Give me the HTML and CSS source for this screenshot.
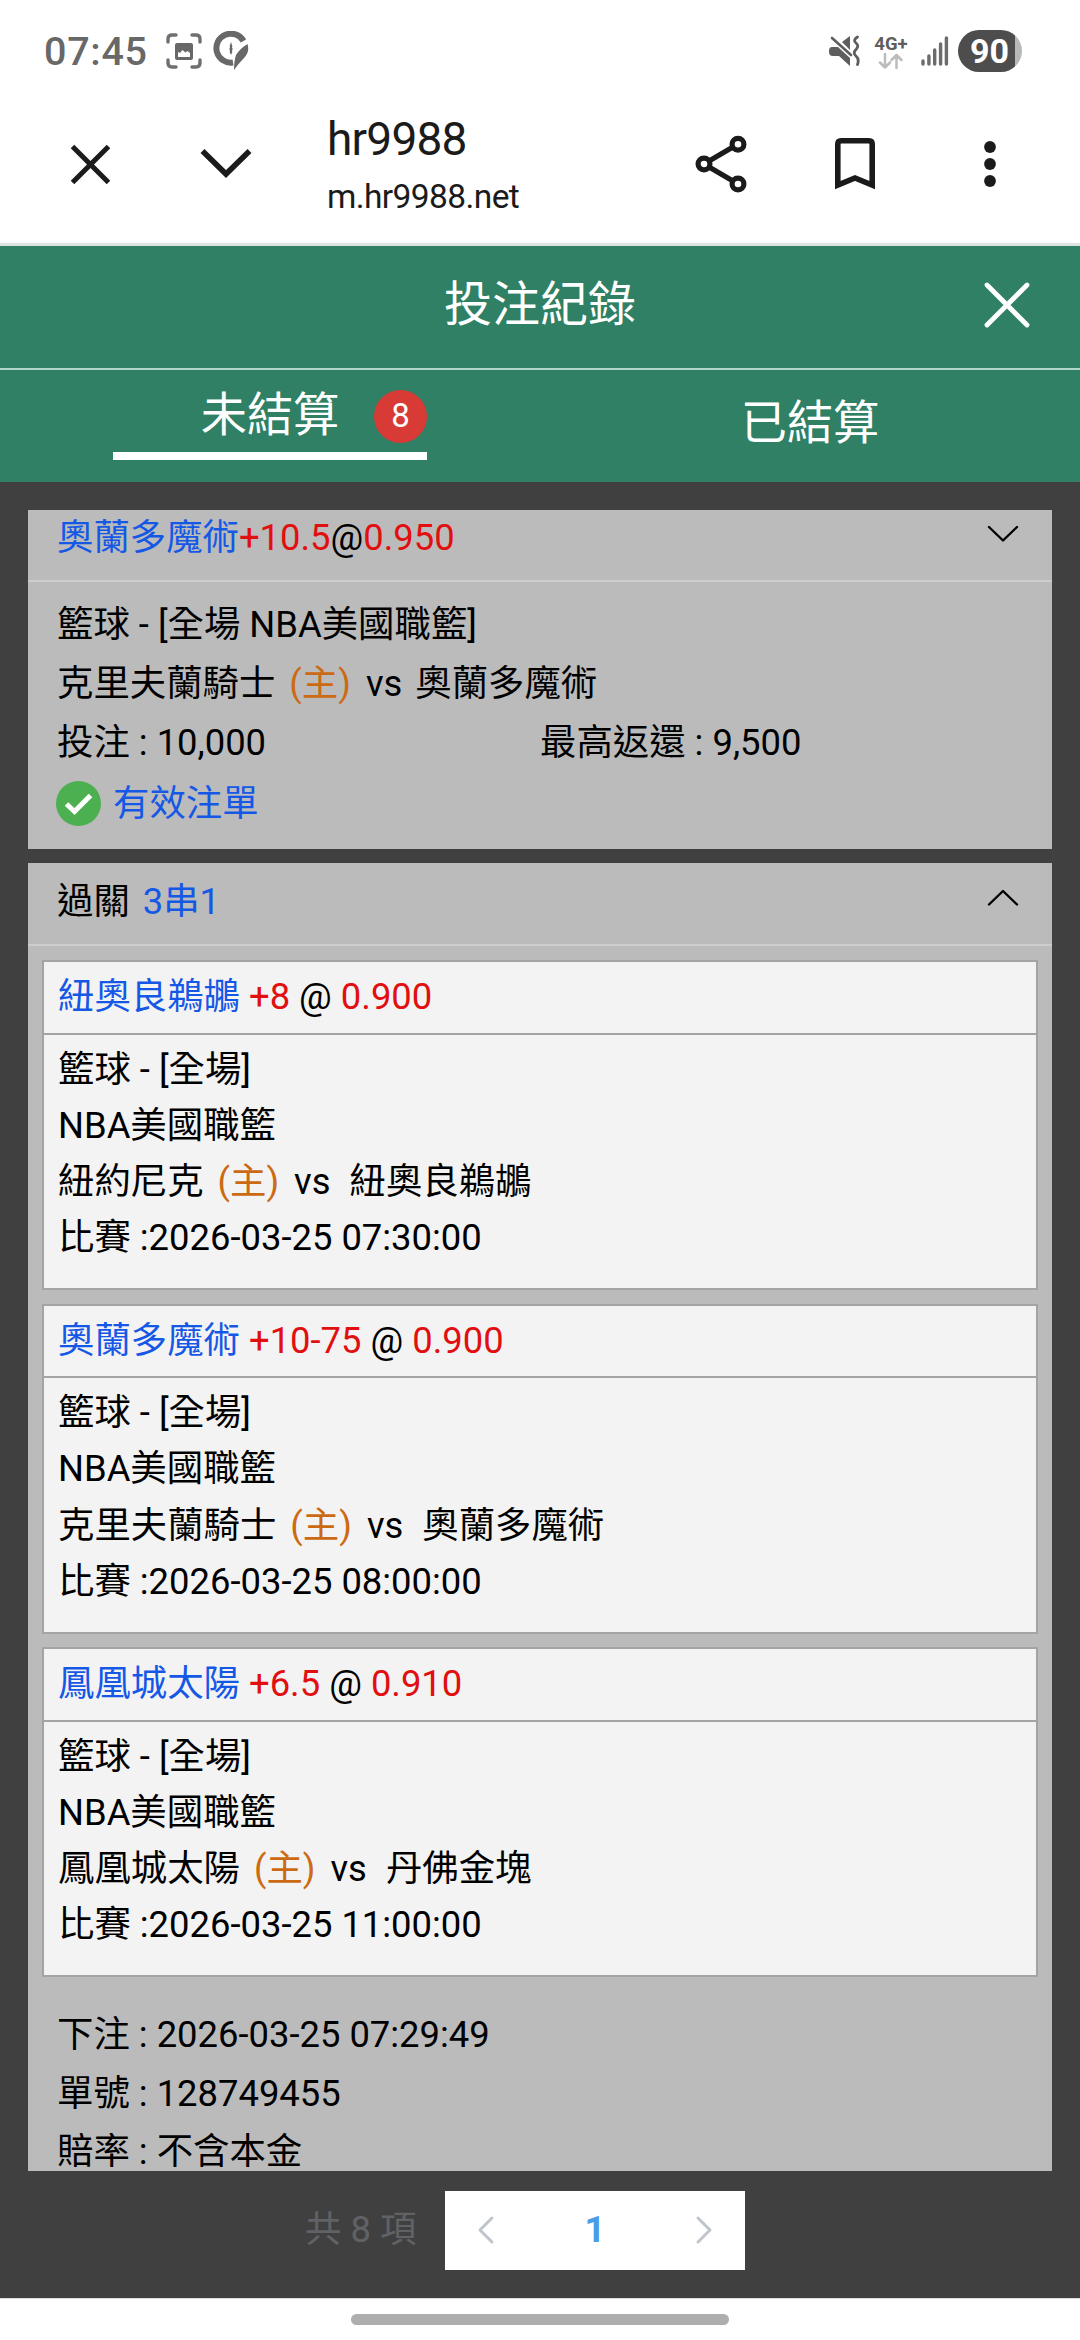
FILE: index.html
```
<!DOCTYPE html>
<html lang="zh-Hant">
<head>
<meta charset="utf-8">
<title>投注紀錄</title>
<link rel="stylesheet" href="styles.css">
</head>
<body>
<div class="screen">
  <div class="statusbar">
    <span class="clock">07:45</span>
    <svg class="ic-shot" width="36" height="36" viewBox="0 0 36 36"><g fill="none" stroke="#707070" stroke-width="3.4" stroke-linecap="round"><path d="M2 9V6q0-4 4-4h4M26 2h4q4 0 4 4v3M34 27v3q0 4-4 4h-4M10 34H6q-4 0-4-4v-3"/></g><path fill="#686868" fill-rule="evenodd" d="M11 10h14q2 0 2 2v13q0 2-2 2H11q-2 0-2-2V12q0-2 2-2zM12 24h12v-4l-2.500-2-2 1.500-3-2.500-2.500 3-2-1z"/></svg>
    <svg class="ic-clock" width="36" height="40" viewBox="0 0 36 40"><path d="M30.500 10A14.500 14.500 0 1 0 20 31.500" fill="none" stroke="#686868" stroke-width="6"/><path d="M34.500 13q-8 5-11.500 11-2 6-2 15 5-7 10-12 6-6 3.500-14z" fill="#686868"/><path d="M18 11l1.300 4-.3 2 1 1-1 1 .3 2-1.300 3-1.300-3 .3-2-1-1 1-1-.3-2z" fill="#686868"/></svg>
    <div class="status-right">
      <svg width="32" height="32" viewBox="0 0 32 32"><path d="M0 16q0-4 3-4h6l12 11v8L10 21H4q-4 0-4-4z" fill="#5e5e5e"/><path d="M13 7l8-6v14z" fill="#5e5e5e"/><path d="M3 3l19 17" stroke="#5e5e5e" stroke-width="2.600" stroke-linecap="round"/><path d="M28.500 2q-5 3-1.500 6t0 6.500 0 6.500 1.500 8.500" fill="none" stroke="#5e5e5e" stroke-width="2.800" stroke-linecap="round"/></svg>
      <div class="net"><span>4G+</span>
        <svg width="28" height="17" viewBox="0 0 28 17"><path d="M8 1v13M3 9.500l5 5 5-5M19.500 15V2M14.500 7l5-5 5 5" fill="none" stroke="#bcbcbc" stroke-width="2.500" stroke-linecap="round" stroke-linejoin="round"/></svg>
      </div>
      <svg class="signal" width="28" height="32" viewBox="0 0 28 32"><path d="M2 26v3M7.900 21v8M13.700 15v14M19.600 9v20M25.400 3v26" stroke="#6c6c6c" stroke-width="3.400" stroke-linecap="round"/></svg>
      <div class="battery">90</div>
    </div>
  </div>

  <div class="browserbar">
    <svg class="ic-close" width="41" height="41" viewBox="0 0 41 41"><path d="M2.500 2.500l36 36M38.500 2.500l-36 36" stroke="#1b1b1b" stroke-width="5"/></svg>
    <svg class="ic-down" width="52" height="32" viewBox="0 0 52 32"><path d="M2.500 3L26 26 49.500 3" fill="none" stroke="#1b1b1b" stroke-width="5.600"/></svg>
    <div class="site">
      <div class="site-title">hr9988</div>
      <div class="site-url">m.hr9988.net</div>
    </div>
    <svg class="ic-share" width="54" height="60" viewBox="0 0 54 60"><g fill="none" stroke="#1b1b1b" stroke-width="5.200"><circle cx="10" cy="30" r="5.900"/><circle cx="44" cy="10.200" r="5.900"/><circle cx="44" cy="50" r="5.900"/><path d="M15 27l24-14M15 33l24 14"/></g></svg>
    <svg class="ic-mark" width="40" height="52" viewBox="0 0 40 52"><path d="M2.800 47V6q0-3.200 3.200-3.200h28q3.200 0 3.200 3.200v41L20 40z" fill="none" stroke="#1b1b1b" stroke-width="5.600"/></svg>
    <svg class="ic-more" width="12" height="46" viewBox="0 0 12 46"><g fill="#1b1b1b"><circle cx="6" cy="6" r="5.900"/><circle cx="6" cy="23" r="5.900"/><circle cx="6" cy="40" r="5.900"/></g></svg>
  </div>

  <div class="titlebar">
    <h1>投注紀錄</h1>
    <svg class="ic-exit" width="46" height="46" viewBox="0 0 46 46"><path d="M3 3l40 40M43 3L3 43" stroke="#fff" stroke-width="4.800" stroke-linecap="round"/></svg>
  </div>
  <div class="tabs">
    <div class="tab"><div class="tab-active">未結算<span class="badge">8</span></div></div>
    <div class="tab tab-idle">已結算</div>
  </div>

  <div class="list">
    <section class="card card-first">
      <header class="card-head">
        <div><span class="blue">奧蘭多魔術</span><span class="red">+10.5</span>@<span class="red">0.950</span></div>
        <svg class="chev" width="32" height="18" viewBox="0 0 32 18"><path d="M2 2l14 13.500L30 2" fill="none" stroke="#000" stroke-width="2.400" stroke-linecap="round" stroke-linejoin="round"/></svg>
      </header>
      <div class="card-body">
        <div class="row">籃球 - [全場 NBA美國職籃]</div>
        <div class="row">克里夫蘭騎士<span class="home">(主)</span>vs<span class="away">奧蘭多魔術</span></div>
        <div class="row split"><span>投注 : 10,000</span><span>最高返還 : 9,500</span></div>
        <div class="row valid">
          <svg width="45" height="45" viewBox="0 0 45 45"><circle cx="22.500" cy="22.500" r="22.500" fill="#4caf50"/><path d="M10.500 23l8 7.500L34.500 14.500" fill="none" stroke="#fff" stroke-width="5"/></svg>
          <span class="blue">有效注單</span>
        </div>
      </div>
    </section>

    <section class="card">
      <header class="card-head">
        <div>過關<span class="blue combo">3串1</span></div>
        <svg class="chev" width="32" height="18" viewBox="0 0 32 18"><path d="M2 15.500L16 2l14 13.500" fill="none" stroke="#000" stroke-width="2.400" stroke-linecap="round" stroke-linejoin="round"/></svg>
      </header>
      <div class="legs">
        <article class="leg">
          <div class="leg-head"><span class="blue">紐奧良鵜鶘</span> <span class="red">+8</span> @ <span class="red">0.900</span></div>
          <div class="leg-body">
            <div>籃球 - [全場]</div>
            <div>NBA美國職籃</div>
            <div>紐約尼克<span class="home">(主)</span>vs<span class="away">紐奧良鵜鶘</span></div>
            <div>比賽 :2026-03-25 07:30:00</div>
          </div>
        </article>
        <article class="leg">
          <div class="leg-head"><span class="blue">奧蘭多魔術</span> <span class="red">+10-75</span> @ <span class="red">0.900</span></div>
          <div class="leg-body">
            <div>籃球 - [全場]</div>
            <div>NBA美國職籃</div>
            <div>克里夫蘭騎士<span class="home">(主)</span>vs<span class="away">奧蘭多魔術</span></div>
            <div>比賽 :2026-03-25 08:00:00</div>
          </div>
        </article>
        <article class="leg">
          <div class="leg-head"><span class="blue">鳳凰城太陽</span> <span class="red">+6.5</span> @ <span class="red">0.910</span></div>
          <div class="leg-body">
            <div>籃球 - [全場]</div>
            <div>NBA美國職籃</div>
            <div>鳳凰城太陽<span class="home">(主)</span>vs<span class="away">丹佛金塊</span></div>
            <div>比賽 :2026-03-25 11:00:00</div>
          </div>
        </article>
      </div>
      <div class="card-foot">
        <div>下注 : 2026-03-25 07:29:49</div>
        <div>單號 : 128749455</div>
        <div>賠率 : 不含本金</div>
      </div>
    </section>
  </div>

  <div class="pagination">
    <span class="total">共 8 項</span>
    <div class="pager">
      <svg width="20" height="30" viewBox="0 0 20 30"><path d="M16 3L4 15l12 12" fill="none" stroke="#c0c4cc" stroke-width="3" stroke-linecap="round" stroke-linejoin="round"/></svg>
      <b>1</b>
      <svg width="20" height="30" viewBox="0 0 20 30"><path d="M4 3l12 12L4 27" fill="none" stroke="#c0c4cc" stroke-width="3" stroke-linecap="round" stroke-linejoin="round"/></svg>
    </div>
  </div>
  <div class="navbar"><div class="handle"></div></div>
</div>
</body>
</html>
```
FILE: styles.css
```
* { box-sizing: border-box; }
body { margin: 0; }
svg { display: block; flex: none; }

.screen {
  width: 1080px;
  height: 2340px;
  display: flex;
  flex-direction: column;
  overflow: hidden;
  background: #404040;
  color: #000;
  font-family: Roboto, "Noto Sans CJK TC", sans-serif;
  font-size: 36.4px;
}

/* Phone status bar */
.statusbar {
  flex: none;
  height: 102px;
  padding: 0 58px 0 44px;
  display: flex;
  align-items: center;
  background: #fff;
}
.clock { width: 121px; font-size: 39.500px; font-weight: 500; letter-spacing: 0.700px; color: #686868; }
.ic-shot { margin-left: 1px; }
.ic-clock { margin-left: 11px; }
.status-right { margin-left: auto; display: flex; align-items: center; color: #5e5e5e; }
.net {
  width: 36px;
  margin: 2px 0 0 12px;
  display: flex;
  flex-direction: column;
  align-items: center;
  font-size: 18.500px;
  font-weight: 700;
  line-height: 18px;
}
.signal { margin-left: 12px; }
.battery {
  width: 64px;
  height: 42px;
  margin-left: 9px;
  padding-right: 1px;
  border-radius: 21px;
  background: linear-gradient(90deg, #4d4d4d 57px, #b8b8b8 57px);
  color: #fff;
  font-size: 34px;
  font-weight: 700;
  line-height: 43px;
  text-align: center;
}

/* Browser custom tab bar */
.browserbar {
  flex: none;
  height: 144px;
  padding-left: 70px;
  padding-bottom: 17px;
  display: flex;
  align-items: center;
  background: #fff;
  border-bottom: 3px solid #dde3e2;
  color: #1b1b1b;
}
.ic-down { margin-left: 89px; }
.site { width: 360px; margin: 7px 0 0 75px; }
.site-title { font-size: 46px; line-height: 58px; letter-spacing: -0.800px; }
.site-url { font-size: 33.500px; line-height: 57px; letter-spacing: -0.600px; }
.ic-share { margin-left: 7px; }
.ic-mark { margin-left: 87px; }
.ic-more { margin-left: 109px; }

/* Page title and tabs */
.titlebar {
  flex: none;
  height: 124px;
  padding: 0 50px 5px;
  display: grid;
  grid-template-columns: 46px 1fr 46px;
  align-items: center;
  background: #2f8064;
  border-bottom: 2px solid #b4d6ca;
  color: #fff;
}
.titlebar h1 { grid-column: 2; margin: 0; font-size: 48px; font-weight: 400; line-height: 60px; text-align: center; }
.tabs {
  flex: none;
  height: 112px;
  display: grid;
  grid-template-columns: 1fr 1fr;
  background: #2f8064;
  color: #fff;
  font-size: 46.200px;
  text-align: center;
}
.tab { padding-top: 10px; }
.tab-active { position: relative; width: 314px; height: 80px; margin: 0 auto; line-height: 70px; border-bottom: 8px solid #fff; }
.tab-idle { padding-top: 0; line-height: 107px; }
.badge {
  position: absolute;
  top: 10px;
  right: 0;
  width: 53px;
  height: 53px;
  border-radius: 50%;
  background: #d83a35;
  font-size: 33px;
  line-height: 51px;
}

/* Bet list */
.list {
  flex: none;
  height: 1661px;
  margin: 28px 28px 0;
  overflow: hidden;
}
.card { background: #bbb; margin-bottom: 14px; }
.card-first { margin-top: -11px; }
.card-head {
  height: 83px;
  padding: 0 33px 3px 29px;
  line-height: 58px;
  display: flex;
  justify-content: space-between;
  align-items: center;
  border-bottom: 2px solid #cdcdcd;
}
.chev { margin-bottom: 8px; }
.card-body { padding: 13px 29px 14px; line-height: 59px; }
.split { display: grid; grid-template-columns: 1fr 1fr; }
.valid { height: 63px; margin-left: -1px; line-height: 63px; display: flex; align-items: center; gap: 12px; }
.blue { color: #1558e6; }
.red { color: #e10f0f; }
.home { margin: 0 15px 0 14px; color: #cb6a12; }
.away { margin-left: 13px; }
.leg .away { margin-left: 19px; }
.combo { margin-left: 13px; }

.legs { padding: 14px 14px 0; display: grid; gap: 13.700px; }
.leg { height: 330px; border: 2px solid #a4a4a4; background: #f3f3f3; }
.leg-head { height: 72.500px; padding-left: 14px; line-height: 69px; border-bottom: 2.500px solid #a4a4a4; }
.leg-body { padding: 7px 0 0 14px; line-height: 56.200px; }
.card-foot { padding: 29px 29px 0; line-height: 58.500px; }

/* Pagination */
.pagination {
  flex: none;
  height: 127px;
  padding: 20px 0 0 305px;
  display: flex;
  align-items: flex-start;
}
.total { width: 140px; line-height: 77px; color: #606266; white-space: nowrap; }
.pager {
  width: 300px;
  height: 79px;
  padding: 0 31px 2px;
  display: flex;
  align-items: center;
  justify-content: space-between;
  background: #fff;
}
.pager b { color: #4a9be8; font-weight: 700; }

/* Gesture bar */
.navbar { flex: 1; padding-top: 15px; background: #fff; border-top: 1px solid #ddd; }
.handle { width: 378px; height: 11px; margin: 0 auto; border-radius: 6px; background: #aeaeae; }
```
